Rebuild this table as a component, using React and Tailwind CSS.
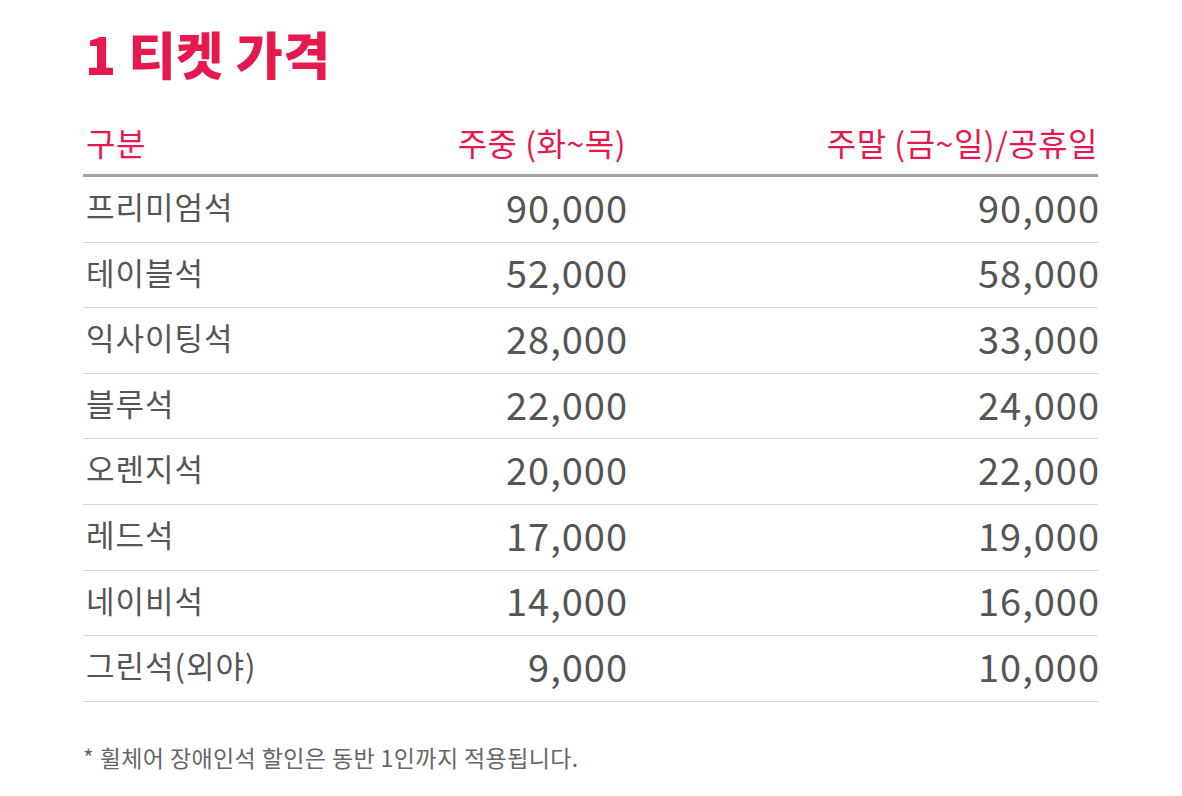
import React from "react";

const rows = [
  { name: "프리미엄석", weekday: "90,000", weekend: "90,000" },
  { name: "테이블석", weekday: "52,000", weekend: "58,000" },
  { name: "익사이팅석", weekday: "28,000", weekend: "33,000" },
  { name: "블루석", weekday: "22,000", weekend: "24,000" },
  { name: "오렌지석", weekday: "20,000", weekend: "22,000" },
  { name: "레드석", weekday: "17,000", weekend: "19,000" },
  { name: "네이비석", weekday: "14,000", weekend: "16,000" },
  { name: "그린석(외야)", weekday: "9,000", weekend: "10,000" },
];

const font = { fontFamily: '"Noto Sans CJK KR", "Noto Sans", sans-serif' };

const App = () => {
  return (
    <div className="w-[1182px] h-[796px] bg-white overflow-hidden" style={font}>
      <div className="ml-[83px] w-[1015px] pt-[26px]">
        {/* Title */}
        <h1 className="text-[51px] leading-[54px] font-black text-[#e5194e] tracking-[0.5px] pl-[2px]">
          1 티켓 가격
        </h1>

        {/* Header */}
        <div className="mt-[37px] grid grid-cols-[1fr_272px_472px] items-center h-[60px] pb-[8px] border-b-[3px] border-[#a3a3a3] text-[32px] text-[#e5194e] tracking-[0.5px]">
          <div className="pl-[3px]">구분</div>
          <div className="text-right">주중 (화~목)</div>
          <div className="text-right">주말 (금~일)/공휴일</div>
        </div>

        {/* Rows */}
        {rows.map((row) => (
          <div
            key={row.name}
            className="grid grid-cols-[1fr_272px_472px] items-center h-[65.6px] pb-[6px] border-b border-[#d6d6d6] text-[#555555]"
          >
            <div className="pl-[3px] text-[31px] tracking-[1px]">{row.name}</div>
            <div className="text-right text-[38px] tracking-[1px] -mr-[2px]">{row.weekday}</div>
            <div className="text-right text-[38px] tracking-[1px] -mr-[2px]">{row.weekend}</div>
          </div>
        ))}

        {/* Note */}
        <p className="mt-[38px] text-[23px] text-[#666666] tracking-[0.4px]">
          * 휠체어 장애인석 할인은 동반 1인까지 적용됩니다.
        </p>
      </div>
    </div>
  );
};

export default App;
